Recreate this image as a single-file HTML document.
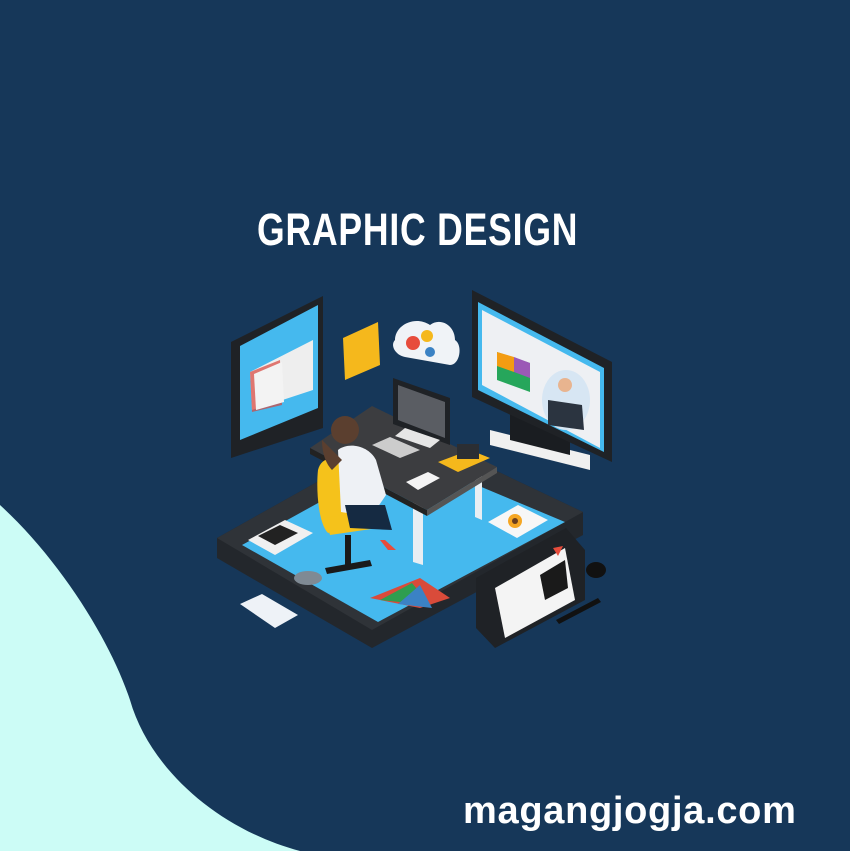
<!DOCTYPE html>
<html><head><meta charset="utf-8"><style>
html,body{margin:0;padding:0}
body{width:850px;height:851px;background:#163759;position:relative;overflow:hidden;font-family:"Liberation Sans",sans-serif}
.t{position:absolute;left:0;width:850px;top:204px;text-align:center;color:#fff;font-family:"Liberation Sans",sans-serif;font-weight:bold;font-size:45px;letter-spacing:1px;transform:scaleX(0.79);transform-origin:390px 0}
.f{position:absolute;left:463px;top:790px;color:#fff;font-weight:bold;font-size:38px;letter-spacing:0.7px}
svg{position:absolute;left:0;top:0}
</style></head><body>
<svg width="850" height="851" viewBox="0 0 850 851">
<path d="M0,505 C60,560 110,640 130,700 C150,770 220,830 300,851 L0,851 Z" fill="#ccfcf6"/>
<polygon points="217,538 410,430 583,512 583,535 372,648 217,558" fill="#23272c"/>
<polygon points="217,538 410,430 583,512 372,630" fill="#2f3338"/>
<polygon points="242,545 405,455 565,522 378,622" fill="#45b9ee"/>
<ellipse cx="308" cy="578" rx="14" ry="7" fill="#7f8a94"/>
<polygon points="231,342 323,296 323,428 231,458" fill="#1f2226"/>
<polygon points="240,346 318,305 318,408 240,440" fill="#45b9ee"/>
<polygon points="250,372 313,340 313,390 252,410" fill="#eee"/>
<polygon points="250,372 280,360 282,405 252,412" fill="#d9433a" opacity=".7"/>
<polygon points="254,374 282,362 284,402 256,410" fill="#f3f3f3"/>
<polygon points="343,338 378,322 380,365 345,380" fill="#f5b81c"/>
<path d="M395,340 c0,-15 20,-25 35,-15 c10,-8 25,0 25,15 c8,5 5,25 -5,25 l-45,-8 c-10,-2 -15,-12 -10,-17z" fill="#f0f3f7"/>
<circle cx="413" cy="343" r="7" fill="#e74c3c"/><circle cx="427" cy="336" r="6" fill="#f5b81c"/><circle cx="430" cy="352" r="5" fill="#3b82c4"/>
<polygon points="490,430 590,455 590,470 490,445" fill="#f0f0f0"/>
<polygon points="510,395 570,410 570,455 510,440" fill="#1a1d21"/>
<polygon points="472,290 612,362 612,462 472,397" fill="#1f2226"/>
<polygon points="478,302 604,368 604,452 478,390" fill="#45b9ee"/>
<polygon points="482,310 600,372 600,448 482,385" fill="#eef0f3"/>
<polygon points="497,352 530,363 530,392 497,380" fill="#26a65b"/>
<polygon points="497,352 514,357 514,372 497,366" fill="#f39c12"/>
<polygon points="514,357 530,363 530,378 514,372" fill="#9b59b6"/>
<ellipse cx="566" cy="400" rx="24" ry="30" fill="#d7e6f3"/>
<polygon points="548,400 582,405 584,430 548,425" fill="#2b3440"/>
<circle cx="565" cy="385" r="7" fill="#e8b48f"/>
<polygon points="413,475 423,478 423,565 413,562" fill="#e8eef3"/>
<polygon points="475,462 482,465 482,520 475,517" fill="#e8eef3"/>
<polygon points="310,448 372,406 497,467 427,510" fill="#3c3d40"/>
<polygon points="310,448 427,510 427,516 310,454" fill="#222"/>
<polygon points="427,510 497,467 497,473 427,516" fill="#555"/>
<polygon points="393,378 450,398 450,445 393,424" fill="#1f2226"/>
<polygon points="398,385 445,402 445,438 398,420" fill="#5a5d63"/>
<polygon points="405,428 440,440 430,448 395,436" fill="#e6e6e6"/>
<polygon points="372,445 400,458 420,450 390,437" fill="#ccc"/>
<polygon points="438,462 470,450 490,458 458,472" fill="#f5b81c"/>
<rect x="457" y="444" width="22" height="15" fill="#2b2e33"/>
<polygon points="406,482 428,472 440,478 418,490" fill="#f4f4f4"/>
<path d="M318,470 c5,-20 30,-10 30,10 l5,45 l-25,8 c-10,-10 -12,-45 -10,-63z" fill="#f5c21b"/>
<polygon points="325,518 375,510 378,528 330,535" fill="#f5c21b"/>
<rect x="345" y="535" width="6" height="30" fill="#1a1a1a"/>
<polygon points="325,568 370,560 372,566 327,574" fill="#1a1a1a"/>
<path d="M338,450 c10,-8 30,-5 38,10 l10,35 l-15,22 l-30,-5 z" fill="#eef1f5"/>
<polygon points="345,505 385,505 392,530 350,528" fill="#152a42"/>
<circle cx="345" cy="430" r="14" fill="#5b3f2f"/>
<path d="M322,440 c0,15 5,25 10,30 l10,-10 z" fill="#5b3f2f"/>
<polygon points="380,540 385,540 396,550 388,550" fill="#e74c3c"/>
<polygon points="248,540 285,520 313,533 275,555" fill="#f0f0f0"/>
<polygon points="258,536 280,525 298,533 275,545" fill="#222"/>
<polygon points="488,522 518,505 548,520 517,538" fill="#f7f7f7"/>
<circle cx="515" cy="521" r="7" fill="#f5a623"/><circle cx="515" cy="521" r="3" fill="#6b3e1e"/>
<polygon points="370,598 420,578 450,598 420,608" fill="#d94b3a"/>
<polygon points="380,600 412,583 430,605" fill="#2e9e4f"/>
<polygon points="398,604 420,585 432,608" fill="#3b82c4"/>
<polygon points="240,604 262,594 298,615 275,628" fill="#eef2f7"/>
<polygon points="476,578 566,528 585,550 585,600 495,648 476,628" fill="#1f2226"/>
<polygon points="495,588 565,548 575,600 505,638" fill="#f4f4f4"/>
<polygon points="540,575 565,560 568,588 545,600" fill="#1a1a1a"/>
<polygon points="553,548 563,546 558,556" fill="#e74c3c"/>
<polygon points="556,620 598,598 601,602 559,624" fill="#111"/>
<ellipse cx="596" cy="570" rx="10" ry="8" fill="#111"/>
</svg>
<div class="t">GRAPHIC DESIGN</div>
<div class="f">magangjogja.com</div>
</body></html>
